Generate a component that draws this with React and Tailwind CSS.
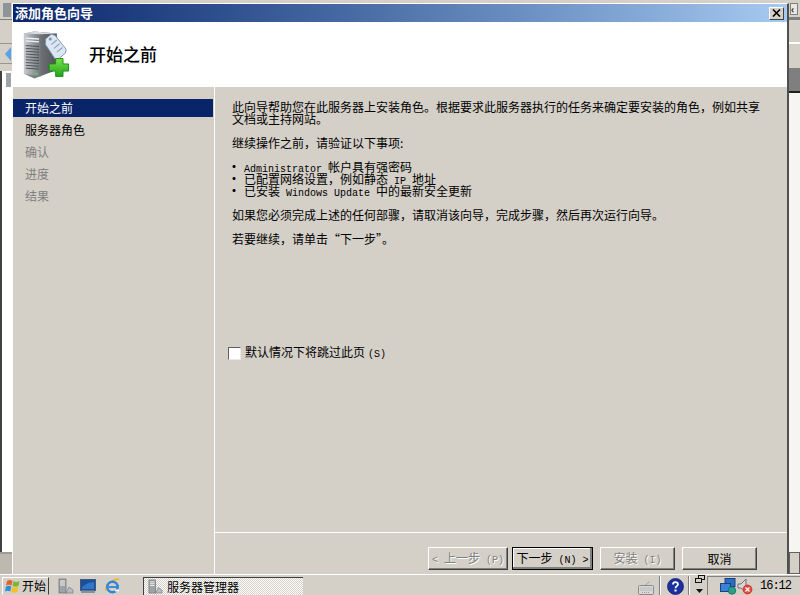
const FONT = '"Noto Sans CJK SC", "Liberation Sans", sans-serif';

function Latin({ children }) {
  return <span className="font-['Liberation_Mono'] text-[10px]">{children}</span>;
}

function Line({ children, className = '' }) {
  return <div className={`h-[12px] leading-[12px] ${className}`}>{children}</div>;
}

function Bullet() {
  return <span className="inline-block w-[16px] -ml-[4px] font-bold">·</span>;
}

function ServerIcon() {
  return (
    <svg width="47" height="50" viewBox="0 0 50 52">
      <defs>
        <linearGradient id="front" x1="0" y1="0" x2="1" y2="0">
          <stop offset="0" stopColor="#c9ccd0" />
          <stop offset="1" stopColor="#6f7479" />
        </linearGradient>
        <linearGradient id="side" x1="0" y1="0" x2="1" y2="0">
          <stop offset="0" stopColor="#8d9196" />
          <stop offset="1" stopColor="#4f5358" />
        </linearGradient>
        <linearGradient id="plus" x1="0" y1="0" x2="0" y2="1">
          <stop offset="0" stopColor="#7fe04a" />
          <stop offset="1" stopColor="#1fa51d" />
        </linearGradient>
      </defs>
      <path d="M1 3 L12 1 L36 3 L36 42 L12 51 L1 46 Z" fill="url(#side)" />
      <path d="M1 3 L19 4 L19 49 L1 46 Z" fill="url(#front)" />
      <path d="M1 3 L12 1 L36 3 L19 4 Z" fill="#d8dade" />
      <path d="M3 8 L17 9 M3 11 L17 12" stroke="#f2f3f4" strokeWidth="1.5" />
      <path d="M3 16 L17 17 M3 19 L17 20 M3 22 L17 23 M3 25 L17 26 M3 28 L17 29 M3 31 L17 32 M3 34 L17 35 M3 37 L17 38 M3 40 L17 41" stroke="#4a4e52" strokeWidth="1" />
      <rect x="13" y="45" width="3" height="2" fill="#58d058" />
      <path d="M24 9 L30 4 L34 5 L46 20 L45 24 L37 31 L34 30 L24 15 Z" fill="#dbe6f2" stroke="#7d93ab" strokeWidth="1" />
      <circle cx="29" cy="9" r="1.6" fill="#7d93ab" />
      <path d="M30 15 L36 10 M33 19 L39 14 M36 23 L42 18" stroke="#8ea3b8" strokeWidth="1.2" />
      <path d="M32 30 H39 V24 H47 V30 H53 V38 H47 V44 H39 V38 H32 Z" transform="translate(-3.5 7) scale(0.98 0.95)" fill="url(#plus)" stroke="#158a16" strokeWidth="1" />
    </svg>
  );
}

function WinButton({ children, disabled, primary, className }) {
  return (
    <div className={`h-[23px] flex items-center justify-center border whitespace-nowrap text-[12px] border-t-white border-l-white border-r-[#404040] border-b-[#404040] shadow-[inset_-1px_-1px_0_#808080] ${primary ? 'outline outline-1 outline-black -outline-offset-1 shadow-[inset_-2px_-2px_0_#808080,inset_1px_1px_0_white]' : ''} ${disabled ? 'text-[#808080] [text-shadow:1px_1px_0_#fff]' : 'text-black'} ${className}`}>
      <span>{children}</span>
    </div>
  );
}

function MiniServer({ size = 16 }) {
  return (
    <svg width={size} height={size} viewBox="0 0 16 16">
      <rect x="1" y="1" width="7" height="14" fill="#9ea3a8" stroke="#5c6166" strokeWidth="0.6" />
      <path d="M2 3 H7 M2 5 H7 M2 7 H7" stroke="#f0f0f0" />
      <path d="M8 15 L11 9 L15 12 L15 15 Z" fill="#b8bcc0" stroke="#6a6e72" strokeWidth="0.6" />
    </svg>
  );
}

function StartFlag() {
  return (
    <svg width="16" height="16" viewBox="0 0 16 16">
      <path d="M2 3 Q5 1 7.5 3 L6.5 7.5 Q4 6 1 7.5 Z" fill="#e8632a" />
      <path d="M8.5 3 Q11 5 14.5 3 L13.5 8 Q10.5 9.5 7.5 8 Z" fill="#7cb82f" />
      <path d="M1 8.5 Q4 7 6.3 8.5 L5.3 13.5 Q3 12 0 13.5 Z" fill="#2e8ed8" />
      <path d="M7.3 9 Q10 10.5 13.3 9 L12.3 14 Q9 15.5 6.3 14 Z" fill="#f5c020" />
    </svg>
  );
}

function Monitor() {
  return (
    <svg width="16" height="16" viewBox="0 0 16 16">
      <rect x="0.5" y="1.5" width="15" height="11" fill="#1d4e96" stroke="#3a5a8a" />
      <path d="M2 9 L8 5 L14 4 V11 H2 Z" fill="#2f76c8" />
      <rect x="1" y="12.5" width="14" height="2.5" fill="#8b9098" />
    </svg>
  );
}

function IeIcon() {
  return (
    <svg width="17" height="17" viewBox="0 0 17 17">
      <path d="M2 13 C1 8 6 2 15 1" fill="none" stroke="#f0b020" strokeWidth="1.4" />
      <circle cx="8.5" cy="9" r="5.2" fill="none" stroke="#2f86d8" strokeWidth="2.6" />
      <path d="M4.5 9 H13" stroke="#2f86d8" strokeWidth="1.8" />
      <path d="M11 12.5 H15" stroke="#f7f7f7" strokeWidth="2" />
    </svg>
  );
}

function KeyboardIcon() {
  return (
    <svg width="16" height="14" viewBox="0 0 16 14">
      <path d="M8 4 C8 2 11 3 11 0.5" fill="none" stroke="#a0a0a0" />
      <rect x="0.5" y="4.5" width="15" height="9" rx="1" fill="#d8d8d8" stroke="#8a8a8a" />
      <path d="M2.5 7 H13.5 M2.5 9 H13.5 M4 11.5 H12" stroke="#9c9c9c" strokeDasharray="1 1" />
    </svg>
  );
}

function HelpIcon() {
  return (
    <svg width="17" height="17" viewBox="0 0 17 17">
      <circle cx="8.5" cy="8.5" r="8" fill="#1c2f9e" stroke="#152070" strokeWidth="0.8" />
      <path d="M6 6.5 C6 3.5 11 3.5 11 6.3 C11 8.3 8.5 8 8.5 10.2" fill="none" stroke="#fff" strokeWidth="1.8" />
      <rect x="7.5" y="11.5" width="2" height="2" fill="#fff" />
    </svg>
  );
}

function ToolbarToggle() {
  return (
    <svg width="10" height="20" viewBox="0 0 10 20">
      <rect x="3.5" y="0.5" width="6" height="4" fill="none" stroke="#111" />
      <rect x="0.5" y="3.5" width="6" height="4" fill="#d4d0c8" stroke="#111" />
      <path d="M1 14 H8 L4.5 18 Z" fill="#111" />
    </svg>
  );
}

function NetworkIcon() {
  return (
    <svg width="17" height="17" viewBox="0 0 17 17">
      <rect x="5" y="0.5" width="10" height="8" fill="#2a6cc0" stroke="#1c3f80" />
      <rect x="0.5" y="5.5" width="10" height="8" fill="#3a82d8" stroke="#1c3f80" />
      <circle cx="12" cy="12.5" r="3.8" fill="#28a08a" stroke="#106858" strokeWidth="0.7" />
    </svg>
  );
}

function SpeakerMuted() {
  return (
    <svg width="16" height="17" viewBox="0 0 16 17">
      <path d="M1 6 H4 L9 1 V14 L4 10 H1 Z" fill="#d8d8d8" stroke="#707070" />
      <circle cx="10.5" cy="11.5" r="4.5" fill="#e8483c" stroke="#b02018" strokeWidth="0.6" />
      <path d="M8.5 9.5 L12.5 13.5 M12.5 9.5 L8.5 13.5" stroke="#fff" strokeWidth="1.3" />
    </svg>
  );
}

function LeftSliver() {
  return (
    <div className="w-[12px] shrink-0 flex flex-col">
      <div className="h-[20px] pl-[3px] pt-[3px] border-b border-[#808080]">
        <div className="w-[8px] h-[14px] bg-[#8f9498]" />
      </div>
      <div className="h-[24px] border-b border-[#9a968e] bg-[#d4d0c8]" />
      <div className="h-[20px] flex items-center justify-end pr-[1px] border-b border-[#9a968e]">
        <div className="w-0 h-0 border-y-[7px] border-y-transparent border-r-[6px] border-r-[#5aa2e8]" />
      </div>
      <div className="h-[7px]" />
      <div className="flex-1 bg-white border-l-2 border-[#404040] pt-[2px] pl-[4px]">
        <div className="w-[5px] h-[14px] bg-[#9ea3a8]" />
      </div>
      <div className="h-[22px] border-t-2 border-[#a09c94] bg-[#bdb9b1]" />
    </div>
  );
}

function RightSliver() {
  return (
    <div className="w-[11px] shrink-0 flex flex-col">
      <div className="h-[17px] pt-[3px] pl-[1px]">
        <div className="w-[8px] h-[12px] bg-[#e8e6e0] border border-[#808080] text-[10px] leading-[10px] font-bold text-black">‹</div>
      </div>
      <div className="h-[3px] bg-[#808080]" />
      <div className="h-[24px] border-b-2 border-white bg-[#d4d0c8]" />
      <div className="h-[24px] bg-[#d4d0c8]" />
      <div className="h-[25px] bg-[#7f7f7f] border-b-2 border-[#202020]" />
      <div className="flex-1 bg-[#f6f5f2]" />
      <div className="h-[22px] border border-[#606060] bg-[#d4d0c8]" />
    </div>
  );
}

function Taskbar() {
  return (
    <div className="h-[21px] shrink-0 border-t border-white bg-[#d4d0c8] flex items-end text-[12px] text-black">
      <div className="ml-[2px] w-[47px] h-[18px] flex items-center gap-[1px] pl-[2px] border border-t-white border-l-white border-r-[#404040] border-b-transparent">
        <StartFlag />
        <span className="leading-[16px] whitespace-nowrap">开始</span>
      </div>
      <div className="ml-[9px] flex items-center gap-[6px] h-[18px]">
        <MiniServer />
        <Monitor />
        <div className="ml-[2px]"><IeIcon /></div>
      </div>
      <div className="ml-[22px] w-[160px] h-[18px] flex items-center gap-[4px] pl-[4px] border-l border-t border-[#404040] bg-[repeating-conic-gradient(#ffffff_0%_25%,#d4d0c8_0%_50%)] bg-[length:2px_2px]">
        <MiniServer size={15} />
        <span className="whitespace-nowrap leading-[16px]">服务器管理器</span>
      </div>
      <div className="flex-1" />
      <div className="flex items-end h-[19px]">
        <KeyboardIcon />
        <div className="w-[2px] h-[19px] ml-[5px] border-l border-[#808080] border-r border-r-white" />
        <div className="ml-[6px]"><HelpIcon /></div>
        <div className="w-[2px] h-[19px] ml-[4px] border-l border-[#808080] border-r border-r-white" />
        <div className="ml-[5px]"><ToolbarToggle /></div>
        <div className="ml-[2px] w-[93px] h-[19px] flex items-center border-l border-t border-[#808080] pl-[12px]">
          <NetworkIcon />
          <SpeakerMuted />
          <span className="ml-[7px] font-['Liberation_Mono'] text-[12px] tracking-[-1px] whitespace-nowrap">16:12</span>
        </div>
      </div>
    </div>
  );
}

export default function App() {
  const steps = ['开始之前', '服务器角色', '确认', '进度', '结果'];

  return (
    <div className="w-[800px] h-[595px] flex flex-col bg-[#d4d0c8] overflow-hidden" style={{ fontFamily: FONT }}>
      <div className="flex-1 flex min-h-0">
        <LeftSliver />
        <div className="flex-1 flex flex-col mt-[3px] border-t border-l border-t-white border-l-white border-r-2 border-r-[#505050]">
          <div className="h-[18px] shrink-0 pl-[2px] pr-[3px] flex items-center justify-between bg-gradient-to-r from-[#0a246a] to-[#a6caf0]">
            <span className="text-white font-bold text-[13px] leading-[16px] whitespace-nowrap">添加角色向导</span>
            <div className="w-[15px] h-[13px] flex items-center justify-center bg-[#d4d0c8] border border-t-white border-l-white border-r-[#404040] border-b-[#404040]">
              <svg width="9" height="8" viewBox="0 0 9 8"><path d="M1 0.5 L8 7.5 M8 0.5 L1 7.5" stroke="#000" strokeWidth="1.6" /></svg>
            </div>
          </div>
          <div className="h-[65px] shrink-0 bg-white flex items-center pl-[10px]">
            <ServerIcon />
            <span className="ml-[19px] text-[17px] font-medium leading-[20px] mt-[-2px] whitespace-nowrap">开始之前</span>
          </div>
          <div className="flex-1 flex min-h-0">
            <div className="w-[200px] shrink-0 pt-[12px] text-[12px]">
              {steps.map((s, i) => (
                <div key={s} className={`h-[18px] mb-[4px] pl-[12px] flex items-center whitespace-nowrap ${i === 0 ? 'bg-[#0a246a] text-white' : i === 1 ? 'text-black' : 'text-[#808080]'}`}>
                  {s}
                </div>
              ))}
            </div>
            <div className="flex-1 flex flex-col border-l border-white ml-[1px]">
              <div className="flex-1 pl-[17px] pt-[14px] text-[12px] text-black whitespace-nowrap">
                <Line>此向导帮助您在此服务器上安装角色。根据要求此服务器执行的任务来确定要安装的角色，例如共享</Line>
                <Line>文档或主持网站。</Line>
                <Line className="mt-[12px]">继续操作之前，请验证以下事项:</Line>
                <Line className="mt-[12px]"><Bullet /><Latin>Administrator </Latin>帐户具有强密码</Line>
                <Line><Bullet />已配置网络设置，例如静态<Latin> IP </Latin>地址</Line>
                <Line><Bullet />已安装<Latin> Windows Update </Latin>中的最新安全更新</Line>
                <Line className="mt-[12px]">如果您必须完成上述的任何部骤，请取消该向导，完成步骤，然后再次运行向导。</Line>
                <Line className="mt-[12px]">若要继续，请单击“下一步”。</Line>
                <div className="mt-[102px] -ml-[4px] flex items-center h-[13px]">
                  <div className="w-[13px] h-[13px] bg-white border border-t-[#606060] border-l-[#606060] border-r-[#e8e8e8] border-b-[#e8e8e8]" />
                  <span className="ml-[4px] leading-[12px]">默认情况下将跳过此页<span className="ml-[3px] font-['Liberation_Mono'] text-[10px]">(S)</span></span>
                </div>
              </div>
              <div className="h-[42px] shrink-0 border-t border-white flex items-start pt-[14px] pl-[213px]">
                <WinButton disabled className="w-[80px]"><Latin>&lt; </Latin>上一步<Latin> (P)</Latin></WinButton>
                <WinButton primary className="w-[81px] ml-[4px]">下一步<Latin> (N) &gt;</Latin></WinButton>
                <WinButton disabled className="w-[75px] ml-[7px]">安装<Latin> (I)</Latin></WinButton>
                <WinButton className="w-[75px] ml-[7px]">取消</WinButton>
              </div>
            </div>
          </div>
        </div>
        <RightSliver />
      </div>
      <Taskbar />
    </div>
  );
}
